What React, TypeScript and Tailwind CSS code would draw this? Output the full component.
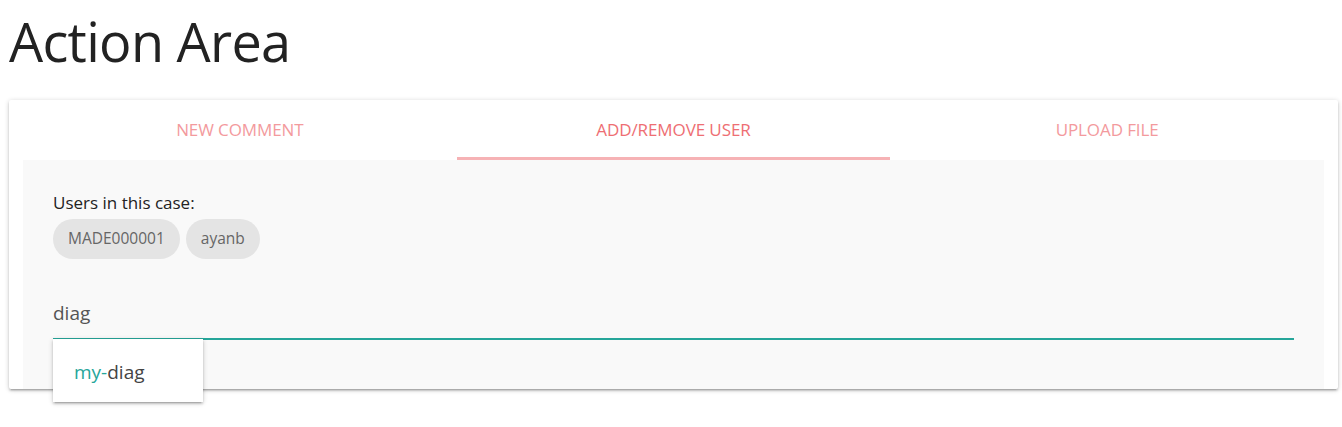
import { useState } from "react";

const tabs = ["NEW COMMENT", "ADD/REMOVE USER", "UPLOAD FILE"];
const users = ["MADE000001", "ayanb"];

export default function App() {
  const [active, setActive] = useState(1);
  const [query, setQuery] = useState("diag");

  return (
    <main className="min-h-screen bg-white font-['Open_Sans',sans-serif] text-[#222]">
      <h1 className="h-[100px] pl-[9px] pt-[6px] text-[54px] font-normal leading-[70px] tracking-[-0.7px]">
        Action Area
      </h1>

      <div className="ml-[9px] mr-[4px] rounded-[2px] bg-white px-[14px] shadow-[0_2px_2px_0_rgba(0,0,0,0.14),0_3px_1px_-2px_rgba(0,0,0,0.12),0_1px_5px_0_rgba(0,0,0,0.2)]">
        <div className="grid h-[60px] grid-cols-3">
          {tabs.map((t, i) => (
            <button
              key={t}
              onClick={() => setActive(i)}
              className={`relative flex items-center justify-center text-[17px] tracking-[-0.1px] ${
                i === active ? "text-[#ee6e73]" : "text-[#f39a9d]"
              }`}
            >
              {t}
              {i === active && (
                <span className="absolute bottom-0 left-0 right-0 h-[3px] bg-[#f6b2b5]" />
              )}
            </button>
          ))}
        </div>

        <div className="bg-[#f9f9f9] px-[30px] pt-[30px] pb-[49px]">
          <p className="text-[17px] leading-[26px] text-[#222]">Users in this case:</p>
          <div className="mt-[3px] flex gap-[6px]">
            {users.map((u) => (
              <span
                key={u}
                className="flex h-[40px] items-center rounded-full bg-[#e4e4e4] px-[15px] text-[15.5px] text-[#666]"
              >
                {u}
              </span>
            ))}
          </div>

          <div className="relative mt-[37px]">
            <input
              value={query}
              onChange={(e) => setQuery(e.target.value)}
              className="block h-[44px] w-full border-b-2 border-[#26a69a] bg-transparent pb-[8px] text-[19px] text-[#555] outline-none"
            />
            <ul className="absolute left-0 top-[43px] z-10 w-[150px] bg-white shadow-[0_2px_2px_0_rgba(0,0,0,0.14),0_3px_1px_-2px_rgba(0,0,0,0.12),0_1px_5px_0_rgba(0,0,0,0.2)]">
              <li className="flex h-[63px] items-center px-[21px] pt-[4px] text-[19px] text-[#444]">
                <span className="text-[#26a69a]">my-</span>diag
              </li>
            </ul>
          </div>
        </div>
      </div>
    </main>
  );
}
